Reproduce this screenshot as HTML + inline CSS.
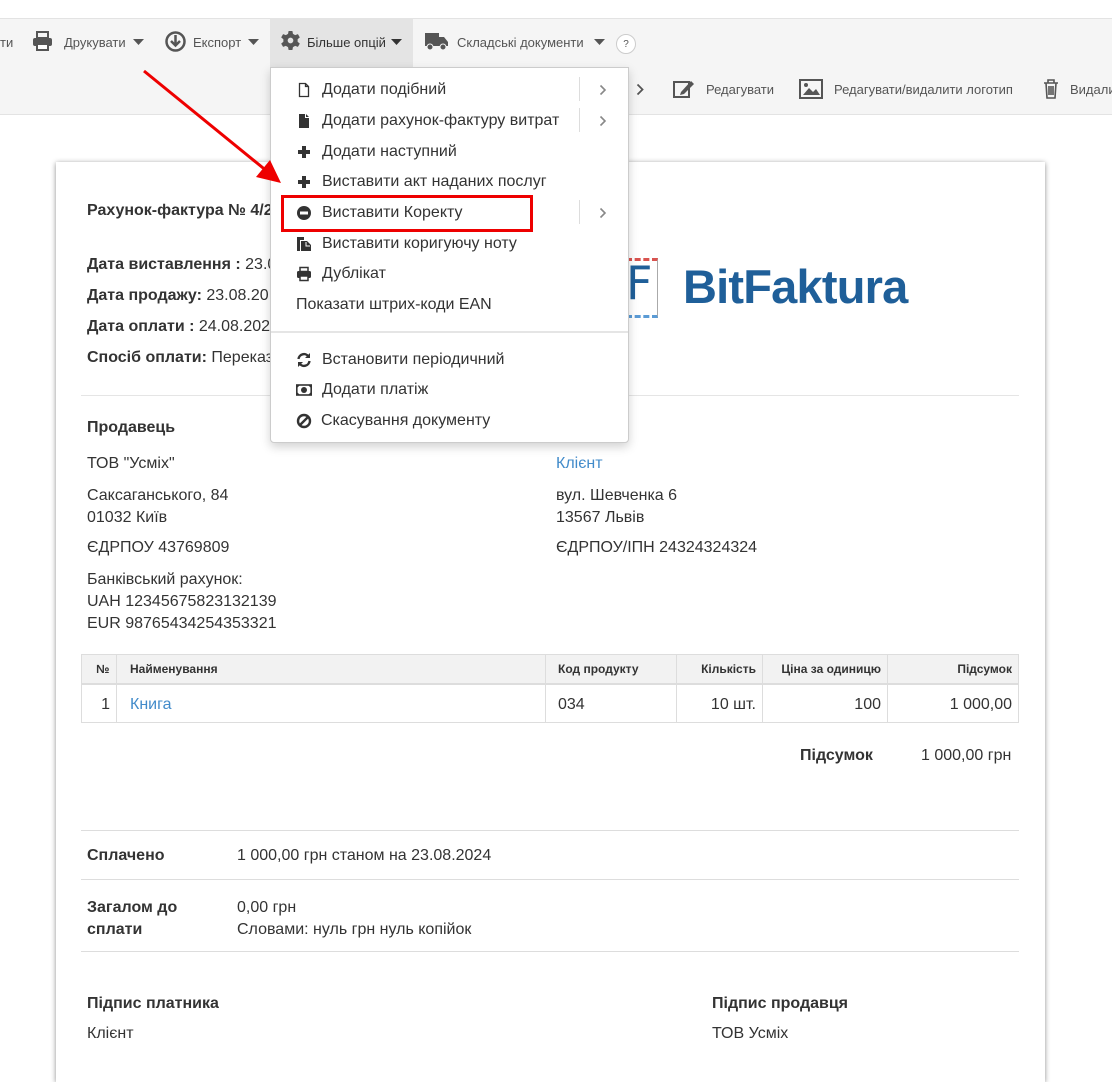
<!DOCTYPE html>
<html><head><meta charset="utf-8"><style>
*{margin:0;padding:0;box-sizing:border-box}
body{width:1112px;height:1068px;overflow:hidden;background:#fff;font-family:"Liberation Sans",sans-serif;color:#333;position:relative}
.a{position:absolute;white-space:nowrap}
.tb{font-size:13px;color:#555}
.p{font-size:16px;color:#333}
.b{font-weight:bold}
.mi{position:absolute;left:0;width:358px;height:30px;font-size:16px;color:#333;line-height:30px}
.mi .ic{position:absolute;left:25px;top:8px;width:16px;height:16px}
.mi .t{position:absolute;left:51px;top:1px}
.mi .sep{position:absolute;left:308px;top:3px;width:1px;height:24px;background:#ddd}
.mi .ch{position:absolute;left:328px;top:10px}
.th{position:absolute;top:655px;height:30px;font-size:12px;font-weight:bold;line-height:28px;color:#333}
.td{position:absolute;top:687px;height:36px;font-size:16px;line-height:36px}
</style></head><body>
<div class="a" style="left:0;top:18px;width:1112px;height:97px;background:#f5f5f5;border-top:1px solid #e3e3e3;border-bottom:1px solid #e3e3e3"></div>
<div class="a" style="left:270px;top:18px;width:143px;height:49px;background:#e4e4e4"></div>
<div class="a tb" style="left:0;top:35px">ти</div>
<svg class="a" style="left:32px;top:31px" width="21" height="20" viewBox="0 0 21 20"><rect x="5" y="1" width="11" height="6" fill="none" stroke="#555" stroke-width="2"/><rect x="1" y="7" width="19" height="8" rx="2" fill="#555"/><rect x="5" y="13" width="11" height="6" fill="#fff" stroke="#555" stroke-width="2"/></svg>
<div class="a tb" style="left:64px;top:35px">Друкувати</div>
<svg class="a" style="left:133px;top:39px" width="11" height="6"><path d="M0 0h11L5.5 6z" fill="#555"/></svg>
<svg class="a" style="left:165px;top:31px" width="21" height="21"><circle cx="10.5" cy="10.5" r="9" fill="none" stroke="#555" stroke-width="2.5"/><path d="M10.5 4v9M6 10l4.5 4.5L15 10" stroke="#555" stroke-width="2.5" fill="none"/></svg>
<div class="a tb" style="left:193px;top:35px">Експорт</div>
<svg class="a" style="left:248px;top:39px" width="11" height="6"><path d="M0 0h11L5.5 6z" fill="#555"/></svg>
<svg class="a" style="left:281px;top:31px" width="19" height="19" viewBox="0 0 20 20"><path d="M8 0h4l.6 3 2.3 1.3 2.9-1 2 3.4-2.3 2v2.6l2.3 2-2 3.4-2.9-1L12.6 17 12 20H8l-.6-3-2.3-1.3-2.9 1-2-3.4 2.3-2V8.7L.2 6.7l2-3.4 2.9 1L7.4 3z" fill="#555"/><circle cx="10" cy="10" r="3" fill="#e4e4e4"/></svg>
<div class="a tb" style="left:307px;top:35px;color:#333">Більше опцій</div>
<svg class="a" style="left:391px;top:39px" width="11" height="6"><path d="M0 0h11L5.5 6z" fill="#333"/></svg>
<svg class="a" style="left:425px;top:31px" width="23" height="20"><rect x="0" y="2" width="14" height="13" fill="#555"/><path d="M14 6h5l4 5v4h-9z" fill="#555"/><circle cx="5" cy="16" r="3" fill="#555" stroke="#f5f5f5"/><circle cx="18" cy="16" r="3" fill="#555" stroke="#f5f5f5"/></svg>
<div class="a tb" style="left:457px;top:35px">Складські документи</div>
<svg class="a" style="left:594px;top:39px" width="11" height="6"><path d="M0 0h11L5.5 6z" fill="#555"/></svg>
<div class="a" style="left:616px;top:34px;width:20px;height:20px;border:1px solid #ccc;border-radius:50%;background:#fff;font-size:10px;text-align:center;line-height:19px;color:#555">?</div>
<svg class="a" style="left:636px;top:83px" width="8" height="13"><path d="M1.5 1.5l5 5-5 5" fill="none" stroke="#555" stroke-width="1.8"/></svg>
<svg class="a" style="left:673px;top:79px" width="22" height="20"><rect x="1" y="3" width="15" height="15" fill="none" stroke="#555" stroke-width="2"/><path d="M8 13l10-11 3 3-10 10-4 1z" fill="#555"/></svg>
<div class="a tb" style="left:706px;top:82px">Редагувати</div>
<svg class="a" style="left:799px;top:79px" width="24" height="20"><rect x="1" y="1" width="22" height="18" fill="none" stroke="#555" stroke-width="2"/><path d="M4 16l6-7 4 4 3-3 4 6z" fill="#555"/><circle cx="7" cy="6" r="2" fill="#555"/></svg>
<div class="a tb" style="left:834px;top:82px">Редагувати/видалити логотип</div>
<svg class="a" style="left:1043px;top:79px" width="16" height="20"><path d="M1 4h14M5 4V1h6v3M3 4l1 15h8l1-15M6 7v9M8 7v9M10 7v9" stroke="#555" stroke-width="1.6" fill="none"/></svg>
<div class="a tb" style="left:1070px;top:82px">Видалити</div>

<div class="a" style="left:56px;top:162px;width:989px;height:920px;background:#fff;box-shadow:0 1px 5px rgba(0,0,0,.45)"></div>
<div class="a p b" style="left:87px;top:202px">Рахунок-фактура № 4/2</div>
<div class="a p" style="left:87px;top:256px"><b>Дата виставлення :</b> 23.0</div>
<div class="a p" style="left:87px;top:287px"><b>Дата продажу:</b> 23.08.20</div>
<div class="a p" style="left:87px;top:318px"><b>Дата оплати :</b> 24.08.202</div>
<div class="a p" style="left:87px;top:349px"><b>Спосіб оплати:</b> Переказ</div>
<div class="a" style="left:600px;top:258px;width:58px;height:60px;border:1px solid #aaa;border-top:3px dashed #d9534f;border-bottom:3px dashed #5b9bd5"></div>
<div class="a" style="left:626px;top:256px;font-size:46px;color:#1f5f99;font-family:'DejaVu Sans',sans-serif">F</div>
<div class="a" style="left:683px;top:259px;font-size:47px;font-weight:bold;color:#1f5f99;font-family:'Liberation Sans',sans-serif;letter-spacing:-0.8px">BitFaktura</div>
<div class="a" style="left:81px;top:395px;width:938px;height:1px;background:#e5e5e5"></div>
<div class="a p b" style="left:87px;top:419px">Продавець</div>
<div class="a p" style="left:87px;top:455px">ТОВ "Усміх"</div>
<div class="a p" style="left:87px;top:485px;line-height:22px">Саксаганського, 84<br>01032 Київ</div>
<div class="a p" style="left:87px;top:539px">ЄДРПОУ 43769809</div>
<div class="a p" style="left:87px;top:569px;line-height:22px">Банківський рахунок:<br>UAH 12345675823132139<br>EUR 98765434254353321</div>
<div class="a p" style="left:556px;top:455px;color:#428bca">Клієнт</div>
<div class="a p" style="left:556px;top:485px;line-height:22px">вул. Шевченка 6<br>13567 Львів</div>
<div class="a p" style="left:556px;top:539px">ЄДРПОУ/ІПН 24324324324</div>

<div class="a" style="left:81px;top:654px;width:938px;height:69px;border:1px solid #ddd"></div>
<div class="a" style="left:82px;top:655px;width:936px;height:30px;background:#f2f2f2;border-bottom:2px solid #ddd"></div>
<div class="a" style="left:116px;top:655px;width:1px;height:67px;background:#ddd"></div>
<div class="a" style="left:545px;top:655px;width:1px;height:67px;background:#ddd"></div>
<div class="a" style="left:676px;top:655px;width:1px;height:67px;background:#ddd"></div>
<div class="a" style="left:762px;top:655px;width:1px;height:67px;background:#ddd"></div>
<div class="a" style="left:887px;top:655px;width:1px;height:67px;background:#ddd"></div>
<div class="th" style="left:96px">№</div>
<div class="th" style="left:130px">Найменування</div>
<div class="th" style="left:558px">Код продукту</div>
<div class="th" style="left:676px;width:80px;text-align:right">Кількість</div>
<div class="th" style="left:762px;width:119px;text-align:right">Ціна за одиницю</div>
<div class="th" style="left:887px;width:125px;text-align:right">Підсумок</div>
<div class="td" style="left:82px;width:28px;text-align:right">1</div>
<div class="td" style="left:130px;color:#428bca">Книга</div>
<div class="td" style="left:558px">034</div>
<div class="td" style="left:676px;width:80px;text-align:right">10 шт.</div>
<div class="td" style="left:762px;width:119px;text-align:right">100</div>
<div class="td" style="left:887px;width:125px;text-align:right">1 000,00</div>
<div class="a p b" style="left:800px;top:747px">Підсумок</div>
<div class="a p" style="left:921px;top:747px">1 000,00 грн</div>

<div class="a" style="left:81px;top:830px;width:938px;height:1px;background:#ddd"></div>
<div class="a p b" style="left:87px;top:847px">Сплачено</div>
<div class="a p" style="left:237px;top:847px">1 000,00 грн станом на 23.08.2024</div>
<div class="a" style="left:81px;top:879px;width:938px;height:1px;background:#ddd"></div>
<div class="a p b" style="left:87px;top:897px;line-height:22px">Загалом до<br>сплати</div>
<div class="a p" style="left:237px;top:897px;line-height:22px">0,00 грн<br>Словами: нуль грн нуль копійок</div>
<div class="a" style="left:81px;top:951px;width:938px;height:1px;background:#ddd"></div>
<div class="a p b" style="left:87px;top:995px">Підпис платника</div>
<div class="a p" style="left:87px;top:1025px">Клієнт</div>
<div class="a p b" style="left:712px;top:995px">Підпис продавця</div>
<div class="a p" style="left:712px;top:1025px">ТОВ Усміх</div>

<div class="a" style="left:270px;top:67px;width:359px;height:376px;background:#fff;border:1px solid #ccc;border-radius:0 0 4px 4px;box-shadow:0 4px 10px rgba(0,0,0,.18)">
 <div class="mi" style="top:6px"><svg class="ic" viewBox="0 0 16 16"><path d="M3.5 1.5h6l3 3v10h-9z M9.5 1.5v3h3" fill="none" stroke="#333" stroke-width="1.3"/></svg><span class="t">Додати подібний</span><span class="sep"></span><svg class="ch" width="8" height="12"><path d="M1.5 1.5l4.5 4.5-4.5 4.5" fill="none" stroke="#888" stroke-width="1.6"/></svg></div>
 <div class="mi" style="top:37px"><svg class="ic" viewBox="0 0 16 16"><path d="M3 1h6v4h4v10H3z M10 1l3 3h-3z" fill="#333"/></svg><span class="t">Додати рахунок-фактуру витрат</span><span class="sep"></span><svg class="ch" width="8" height="12"><path d="M1.5 1.5l4.5 4.5-4.5 4.5" fill="none" stroke="#888" stroke-width="1.6"/></svg></div>
 <div class="mi" style="top:68px"><svg class="ic" viewBox="0 0 16 16"><path d="M6 2h4v4h4v4h-4v4H6v-4H2V6h4z" fill="#333"/></svg><span class="t">Додати наступний</span></div>
 <div class="mi" style="top:98px"><svg class="ic" viewBox="0 0 16 16"><path d="M6 2h4v4h4v4h-4v4H6v-4H2V6h4z" fill="#333"/></svg><span class="t">Виставити акт наданих послуг</span></div>
 <div class="mi" style="top:129px"><svg class="ic" viewBox="0 0 16 16"><circle cx="8" cy="8" r="7" fill="#333"/><rect x="4" y="6.5" width="8" height="3" fill="#fff"/></svg><span class="t">Виставити Коректу</span><span class="sep"></span><svg class="ch" width="8" height="12"><path d="M1.5 1.5l4.5 4.5-4.5 4.5" fill="none" stroke="#888" stroke-width="1.6"/></svg></div>
 <div class="mi" style="top:160px"><svg class="ic" viewBox="0 0 16 16"><path d="M1 1h7v3H4v11H1z M5 5h6l4 4v6H5z" fill="#333"/><path d="M10 6v4h4" fill="none" stroke="#fff"/></svg><span class="t">Виставити коригуючу ноту</span></div>
 <div class="mi" style="top:190px"><svg class="ic" viewBox="0 0 16 16"><rect x="4" y="1.5" width="8" height="4" fill="none" stroke="#333" stroke-width="1.5"/><rect x="1" y="5" width="14" height="7" rx="1.5" fill="#333"/><rect x="4" y="10" width="8" height="4.5" fill="#fff" stroke="#333" stroke-width="1.5"/></svg><span class="t">Дублікат</span></div>
 <div class="mi" style="top:221px"><span class="t" style="left:25px">Показати штрих-коди EAN</span></div>
 <div style="position:absolute;left:0;top:263px;width:357px;height:2px;background:#e5e5e5"></div>
 <div class="mi" style="top:276px"><svg class="ic" viewBox="0 0 16 16"><path d="M2.5 7A5.5 5.5 0 0 1 12.5 4.5M13.5 9A5.5 5.5 0 0 1 3.5 11.5" fill="none" stroke="#333" stroke-width="2.4"/><path d="M14 1v5h-5zM2 15v-5h5z" fill="#333"/></svg><span class="t">Встановити періодичний</span></div>
 <div class="mi" style="top:306px"><svg class="ic" viewBox="0 0 16 16"><rect x="0.8" y="3" width="14.4" height="10" fill="none" stroke="#333" stroke-width="1.6"/><circle cx="8" cy="8" r="3" fill="#333"/><path d="M1 3h3L1 6zM15 3h-3l3 3zM1 13h3l-3-3zM15 13h-3l3-3z" fill="#333"/></svg><span class="t">Додати платіж</span></div>
 <div class="mi" style="top:337px"><svg class="ic" viewBox="0 0 16 16"><circle cx="8" cy="8" r="6" fill="none" stroke="#333" stroke-width="2.4"/><path d="M4 12L12 4" stroke="#333" stroke-width="2.4"/></svg><span class="t" style="left:50px">Скасування документу</span></div>
</div>
<div class="a" style="left:281px;top:195px;width:252px;height:37px;border:3px solid #e00"></div>
<svg class="a" style="left:130px;top:60px" width="160" height="135"><line x1="14" y1="11" x2="138" y2="112" stroke="#e00" stroke-width="3"/><path d="M151 123L126 117L140 100z" fill="#e00"/></svg>
</body></html>
